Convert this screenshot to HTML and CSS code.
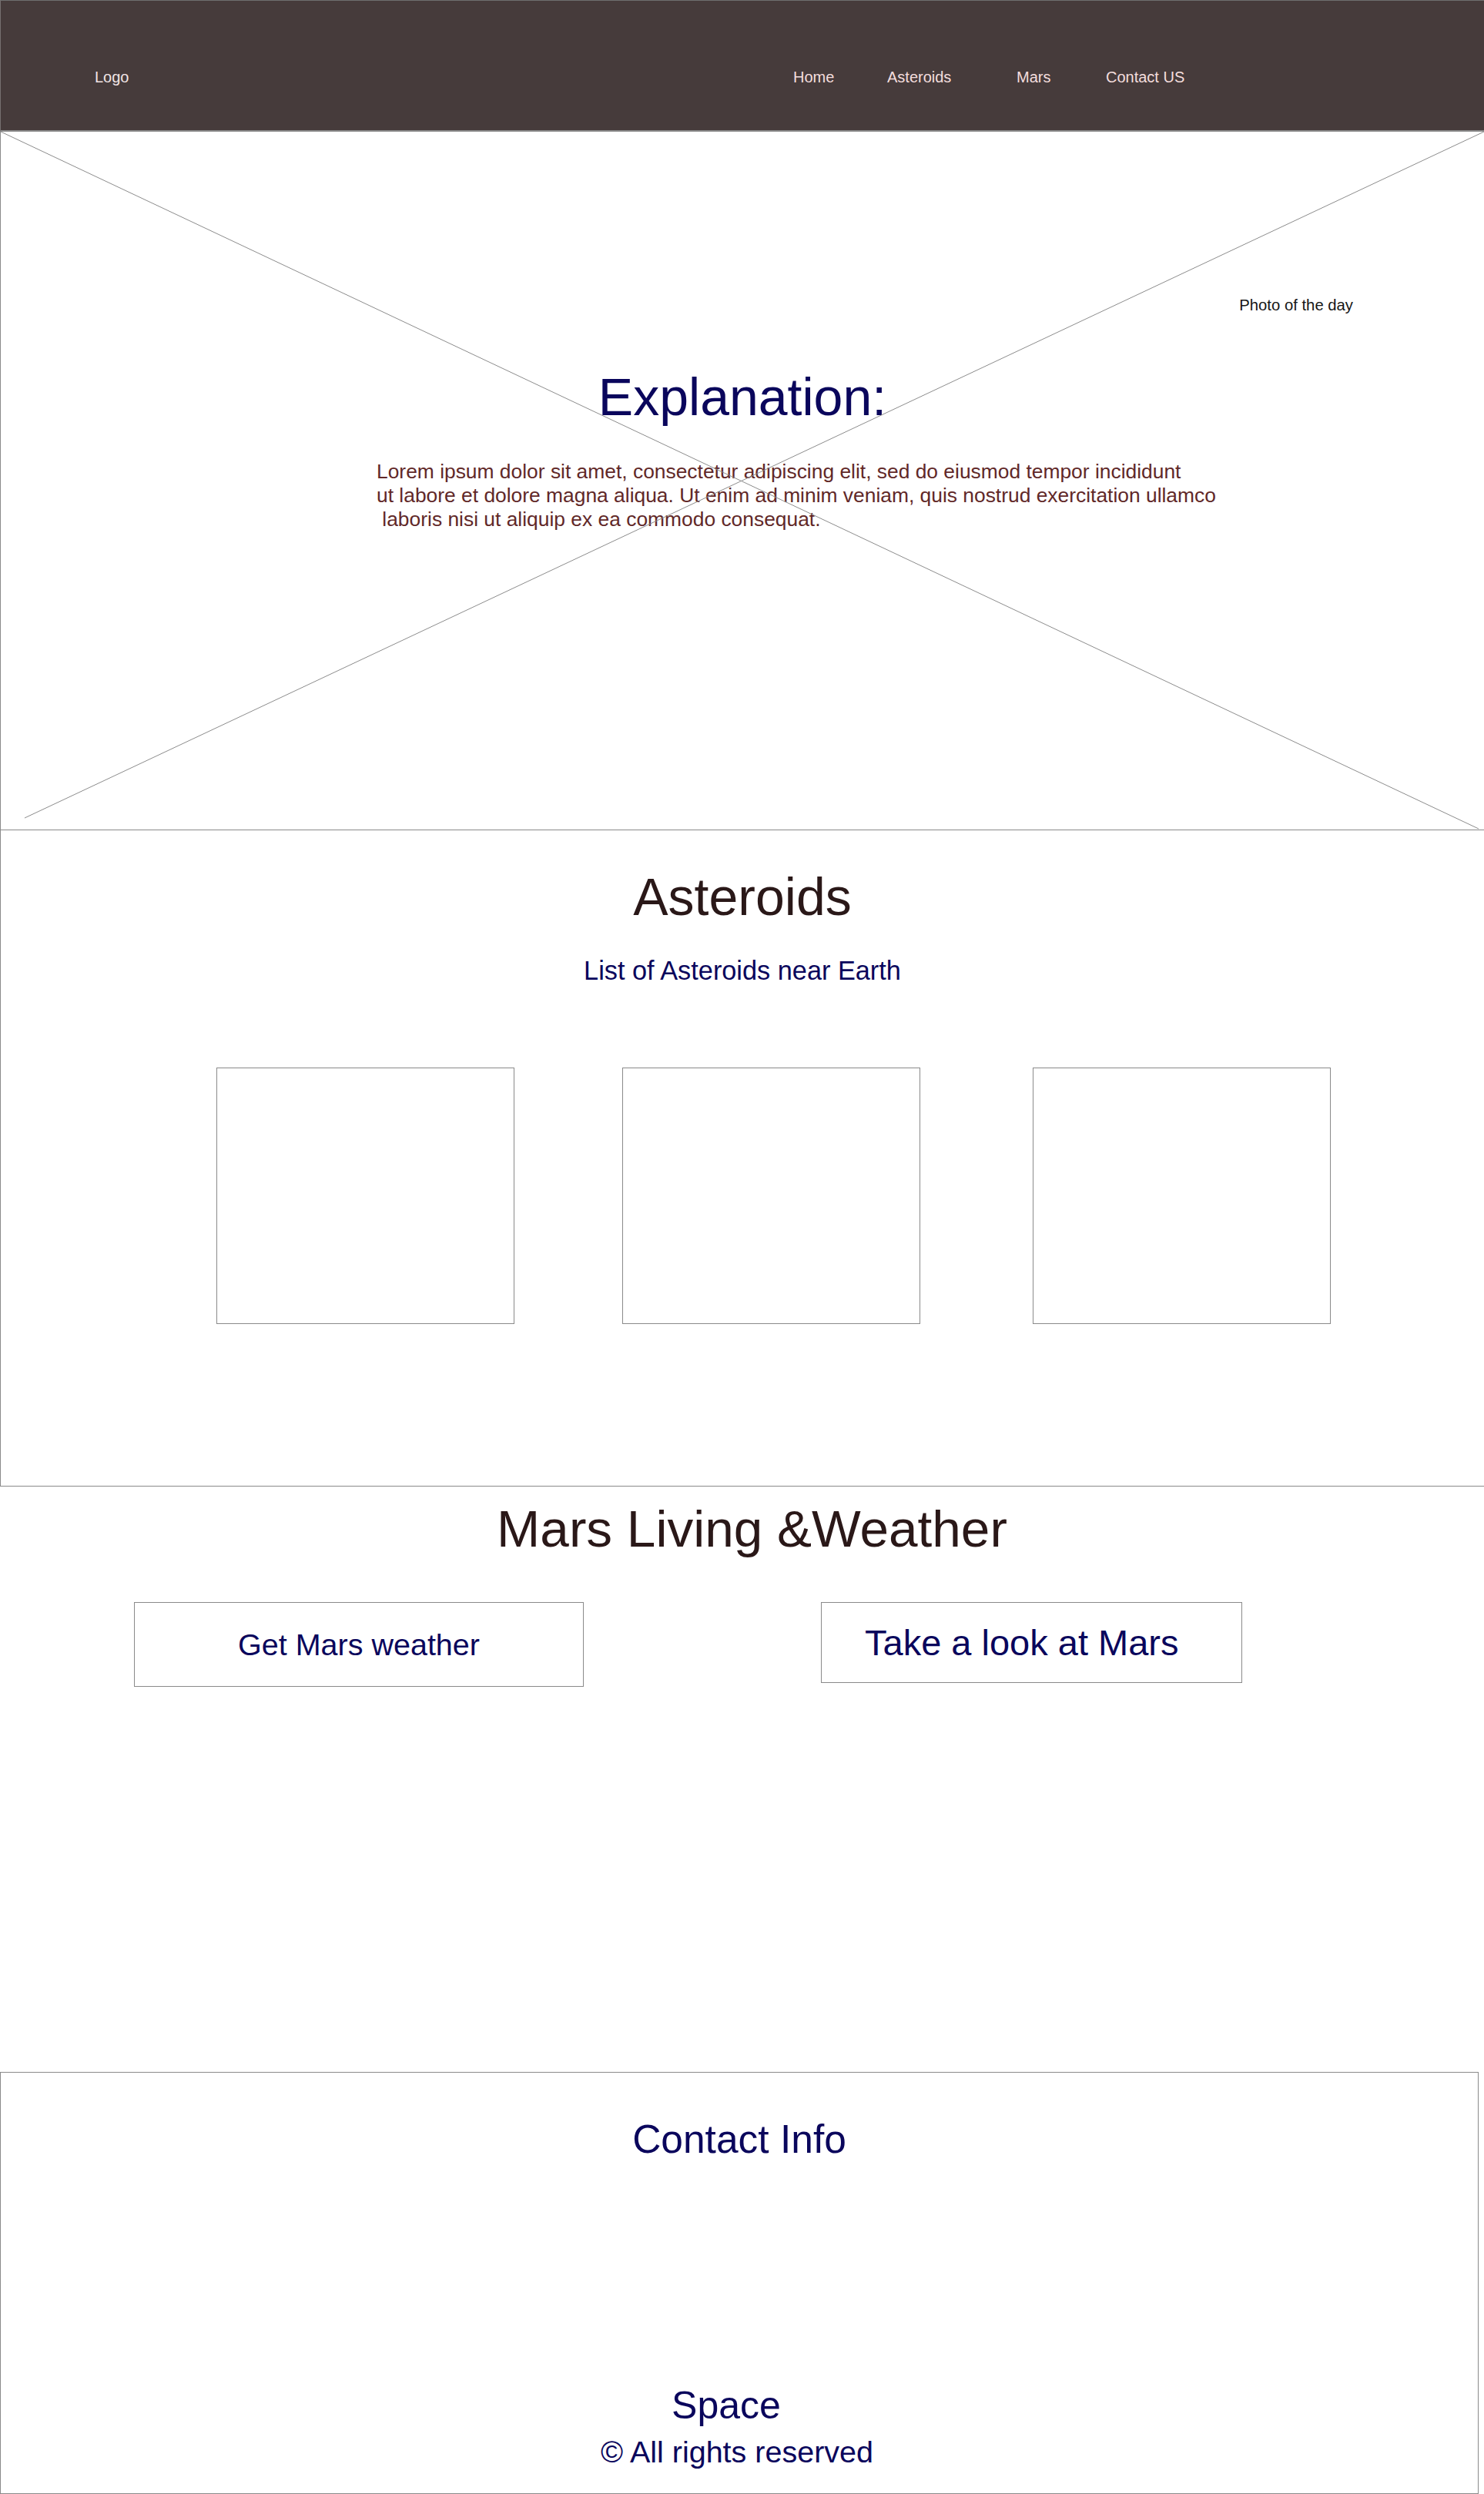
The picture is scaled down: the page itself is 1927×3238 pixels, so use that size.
FILE: index.html
```html
<!DOCTYPE html>
<html lang="en">
<head>
<meta charset="utf-8">
<title>Space</title>
<link rel="stylesheet" href="styles.css">
</head>
<body>
<header class="site-header">
  <div class="logo">Logo</div>
  <nav class="nav">
    <a class="nav-link" href="#">Home</a>
    <a class="nav-link" href="#">Asteroids</a>
    <a class="nav-link" href="#">Mars</a>
    <a class="nav-link" href="#">Contact US</a>
  </nav>
</header>

<section class="hero">
  <svg class="hero-cross" viewBox="0 0 1927 906" preserveAspectRatio="none" aria-hidden="true">
    <line x1="0" y1="0" x2="1920" y2="905" />
    <line x1="1927" y1="0" x2="31" y2="891" />
  </svg>
  <div class="photo-label">Photo of the day</div>
  <h1 class="hero-title">Explanation:</h1>
  <p class="hero-text">Lorem ipsum dolor sit amet, consectetur adipiscing elit, sed do eiusmod tempor incididunt<br>ut labore et dolore magna aliqua. Ut enim ad minim veniam, quis nostrud exercitation ullamco<br>&nbsp;laboris nisi ut aliquip ex ea commodo consequat.</p>
</section>

<section class="asteroids">
  <h2 class="section-title">Asteroids</h2>
  <p class="section-sub">List of Asteroids near Earth</p>
  <div class="cards">
    <div class="card"></div>
    <div class="card"></div>
    <div class="card card-last"></div>
  </div>
</section>

<section class="mars">
  <h2 class="section-title mars-title">Mars Living &amp;Weather</h2>
  <div class="mars-buttons">
    <a class="mars-btn btn-weather" href="#">Get Mars weather</a>
    <a class="mars-btn btn-look" href="#">Take a look at Mars</a>
  </div>
</section>

<footer class="contact">
  <h2 class="contact-title">Contact Info</h2>
  <div class="brand">Space</div>
  <div class="copyright">© All rights reserved</div>
</footer>
</body>
</html>
```

FILE: styles.css
```css
* {
  box-sizing: border-box;
}

html, body {
  margin: 0;
  padding: 0;
}

body {
  width: 1927px;
  font-family: "Liberation Sans", Arial, Helvetica, sans-serif;
  background: #ffffff;
  color: #111;
}

h1, h2, p {
  margin: 0;
  font-weight: normal;
}

a {
  text-decoration: none;
}

/* Header */
.site-header {
  height: 171px;
  background: #463b3b;
  border-top: 1px solid #6e6e6e;
  border-left: 1px solid #767070;
  border-bottom: 2px solid #8a8a8a;
  display: flex;
  align-items: flex-start;
  padding: 87px 0 0 122px;
}

.logo {
  font-size: 20px;
  line-height: 24px;
  color: #f1e4e4;
  width: 907px;
}

.nav {
  display: grid;
  grid-template-columns: 122px 168px 116px auto;
}

.nav-link {
  font-size: 20px;
  line-height: 24px;
  color: #f4dede;
}

/* Hero */
.hero {
  position: relative;
  height: 907px;
  border-left: 1px solid #8a8a8a;
  border-bottom: 1px solid #8a8a8a;
  padding-top: 213px;
}

.hero-cross {
  position: absolute;
  left: 0;
  top: 0;
  width: 100%;
  height: 100%;
}

.hero-cross line {
  stroke: #8c8c8c;
  stroke-width: 1;
}

.photo-label {
  font-size: 20.3px;
  line-height: 24px;
  color: #161616;
  text-align: right;
  padding-right: 170px;
}

.hero-title {
  margin-top: 68px;
  font-size: 68px;
  line-height: 79px;
  color: #0a065c;
  text-align: center;
}

.hero-text {
  margin-top: 42px;
  padding-left: 488px;
  font-size: 26.4px;
  line-height: 31px;
  color: #612828;
}

/* Asteroids */
.asteroids {
  height: 852px;
  border-left: 1px solid #8a8a8a;
  border-bottom: 1px solid #8a8a8a;
  padding-top: 46px;
}

.section-title {
  font-size: 68px;
  line-height: 80px;
  color: #2a1818;
  text-align: center;
}

.section-sub {
  margin-top: 36px;
  font-size: 34.3px;
  line-height: 41px;
  color: #0a065c;
  text-align: center;
}

.cards {
  margin-top: 105px;
  display: flex;
  gap: 140px;
  padding-left: 280px;
}

.card {
  width: 387px;
  height: 333px;
  border: 1px solid #8a8a8a;
}

.card-last {
  margin-left: 6px;
}

/* Mars */
.mars {
  height: 760px;
  padding-top: 15px;
}

.mars-title {
  font-size: 67.5px;
  padding-left: 26px;
}

.mars-buttons {
  margin-top: 55px;
  display: flex;
  align-items: flex-start;
  gap: 308px;
  padding-left: 174px;
}

.mars-btn {
  display: flex;
  align-items: center;
  border: 1px solid #8a8a8a;
  color: #0a065c;
}

.btn-weather {
  width: 584px;
  height: 110px;
  justify-content: center;
  font-size: 39.5px;
}

.btn-look {
  width: 547px;
  height: 105px;
  padding-left: 56px;
  font-size: 47px;
}

/* Contact */
.contact {
  width: 1920px;
  height: 548px;
  border: 1px solid #8a8a8a;
  padding-top: 56px;
  text-align: center;
  color: #0a065c;
}

.contact-title {
  font-size: 51.5px;
  line-height: 60px;
  color: #0a065c;
}

.brand {
  margin-top: 286px;
  font-size: 50px;
  line-height: 60px;
  padding-right: 34px;
}

.copyright {
  margin-top: 7px;
  font-size: 39.5px;
  line-height: 46px;
  padding-right: 6px;
}
```
